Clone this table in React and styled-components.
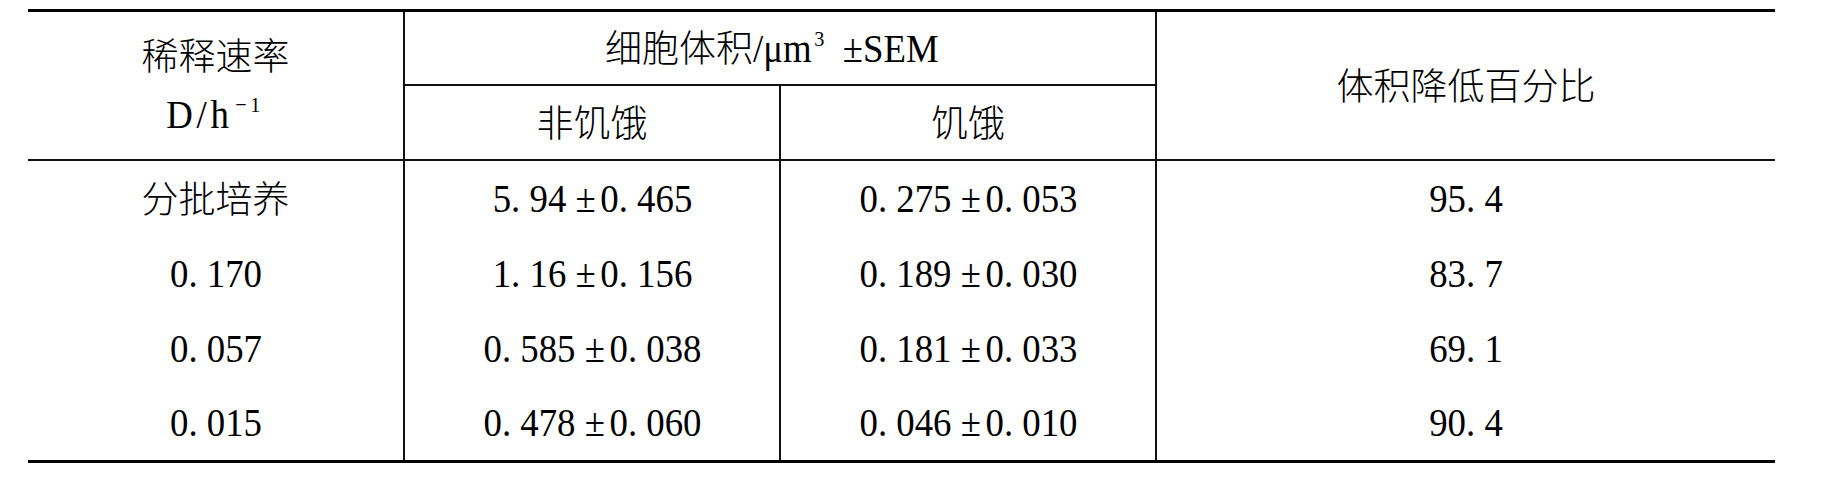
import React from "react";
import styled, { createGlobalStyle } from "styled-components";

const Global = createGlobalStyle`
  html, body { margin: 0; padding: 0; background: #fff; }
  body { font-family: "Liberation Serif", "Noto Sans CJK SC", serif; color: #000; }
`;

const Page = styled.div`
  padding: 9px 0 0 28px;
`;

const Table = styled.table`
  width: 1747px;
  table-layout: fixed;
  border-collapse: separate;
  border-spacing: 0;
  border-top: 3px solid #000;
  border-bottom: 3px solid #000;
  font-size: 34px;
`;

const Row = styled.tr`
  height: ${(p) => p.$h}px;
`;

const Cell = styled.td`
  box-sizing: border-box;
  padding: 0;
  text-align: center;
  vertical-align: middle;
  font-weight: normal;
  white-space: nowrap;
  line-height: 1;
  border-right: ${(p) => (p.$last ? "none" : "2px solid #111")};
  border-bottom: ${(p) => (p.$rule ? "2px solid #111" : "none")};
`;

const Cjk = styled.span`
  font-family: "Noto Sans CJK SC", sans-serif;
  font-size: 37px;
  font-weight: 300;
`;

const Latin = styled.span`
  display: inline-block;
  font-family: "Liberation Serif", serif;
  font-size: 40px;
  white-space: pre;
  transform: scaleX(0.92);
  transform-origin: ${(p) => p.$origin || "center"};
`;

const Pm = styled.span`
  margin-right: 5px;
`;

const Stack = styled.div`
  display: flex;
  flex-direction: column;
  align-items: center;
  gap: 22px;
`;

const Sup = styled.sup`
  font-size: 22px;
  vertical-align: 16px;
  line-height: 0;
  margin-left: 3px;
`;

const Unit = styled(Latin)`
  letter-spacing: 4px;
`;

const Title = styled.div`
  display: inline-flex;
  align-items: baseline;
  justify-content: center;
`;

function Value({ text }) {
  const parts = text.split("±");
  if (parts.length === 1) return <Latin>{text}</Latin>;
  return (
    <Latin>
      {parts[0]}
      <Pm>±</Pm>
      {parts[1]}
    </Latin>
  );
}

const rows = [
  ["分批培养", "5. 94 ±0. 465", "0. 275 ±0. 053", "95. 4", true],
  ["0. 170", "1. 16 ±0. 156", "0. 189 ±0. 030", "83. 7"],
  ["0. 057", "0. 585 ±0. 038", "0. 181 ±0. 033", "69. 1"],
  ["0. 015", "0. 478 ±0. 060", "0. 046 ±0. 010", "90. 4"],
];

export default function App() {
  return (
    <Page>
      <Global />
      <Table>
        <colgroup>
          <col style={{ width: 377 }} />
          <col style={{ width: 376 }} />
          <col style={{ width: 376 }} />
          <col style={{ width: 618 }} />
        </colgroup>
        <thead>
          <Row $h={74}>
            <Cell as="th" rowSpan={2} $rule>
              <Stack>
                <Cjk>稀释速率</Cjk>
                <Unit>
                  D/h<Sup>−1</Sup>
                </Unit>
              </Stack>
            </Cell>
            <Cell as="th" colSpan={2} $rule>
              <Title>
                <Cjk>细胞体积</Cjk>
                <Latin $origin="left">
                  {"/μm"}
                  <Sup>3</Sup>
                  {"  ±SEM"}
                </Latin>
              </Title>
            </Cell>
            <Cell as="th" rowSpan={2} $rule $last>
              <Cjk>体积降低百分比</Cjk>
            </Cell>
          </Row>
          <Row $h={75}>
            <Cell as="th" $rule>
              <Cjk>非饥饿</Cjk>
            </Cell>
            <Cell as="th" $rule>
              <Cjk>饥饿</Cjk>
            </Cell>
          </Row>
        </thead>
        <tbody>
          {rows.map(([a, b, c, d, cjk], i) => (
            <Row key={i} $h={i === 3 ? 74 : 75}>
              <Cell>{cjk ? <Cjk>{a}</Cjk> : <Value text={a} />}</Cell>
              <Cell>
                <Value text={b} />
              </Cell>
              <Cell>
                <Value text={c} />
              </Cell>
              <Cell $last>
                <Value text={d} />
              </Cell>
            </Row>
          ))}
        </tbody>
      </Table>
    </Page>
  );
}
